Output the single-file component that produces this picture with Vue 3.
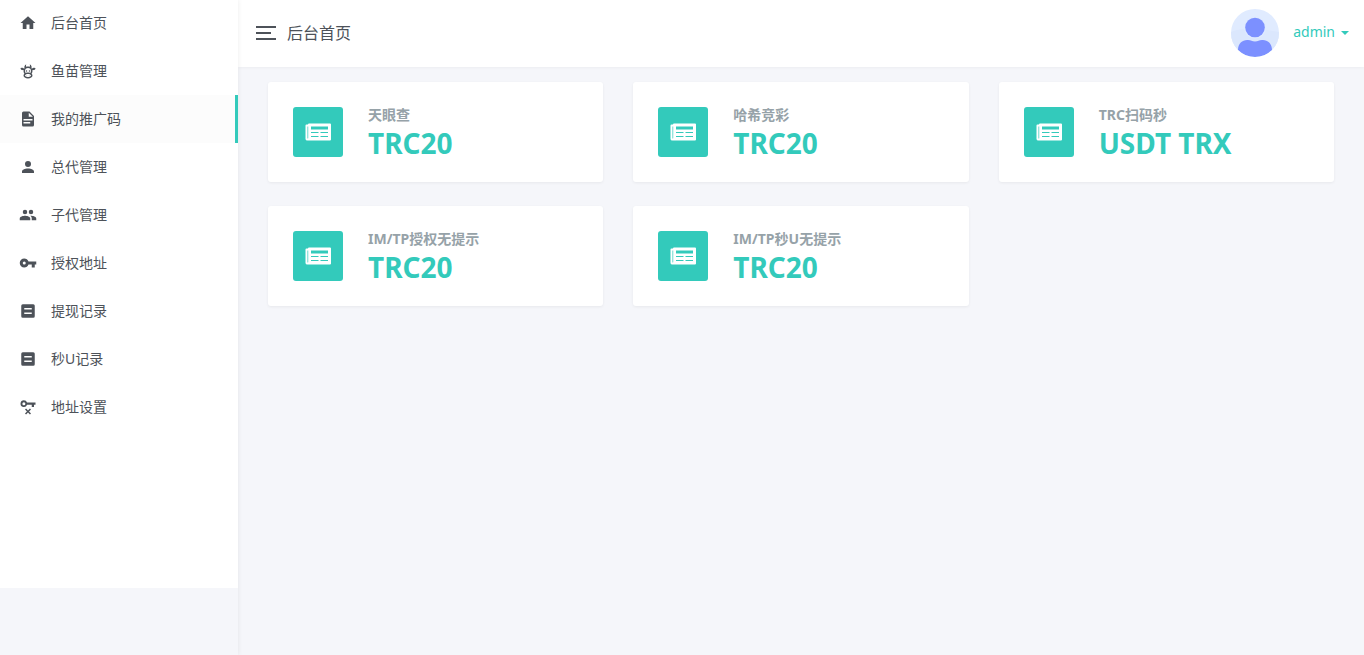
<script setup>
const menu = [
  { label: '后台首页', icon: 'home' },
  { label: '鱼苗管理', icon: 'cow' },
  { label: '我的推广码', icon: 'file', active: true },
  { label: '总代管理', icon: 'account' },
  { label: '子代管理', icon: 'accounts' },
  { label: '授权地址', icon: 'key' },
  { label: '提现记录', icon: 'note' },
  { label: '秒U记录', icon: 'note' },
  { label: '地址设置', icon: 'keyRemove' },
]

const icons = {
  home: 'M10,20V14H14V20H19V12H22L12,3L2,12H5V20H10Z',
  cow: 'M10.5 18A.5.5 0 0 1 11 18.5A.5.5 0 0 1 10.5 19A.5.5 0 0 1 10 18.5A.5.5 0 0 1 10.5 18M13.5 18A.5.5 0 0 1 14 18.5A.5.5 0 0 1 13.5 19A.5.5 0 0 1 13 18.5A.5.5 0 0 1 13.5 18M10 11A1 1 0 0 1 11 12A1 1 0 0 1 10 13A1 1 0 0 1 9 12A1 1 0 0 1 10 11M14 11A1 1 0 0 1 15 12A1 1 0 0 1 14 13A1 1 0 0 1 13 12A1 1 0 0 1 14 11M18 18C18 20.21 15.31 22 12 22C8.69 22 6 20.21 6 18C6 17.1 6.45 16.27 7.2 15.6C6.45 14.6 6 13.35 6 12L6.12 10.78C5.58 10.93 4.93 10.93 4.4 10.78C3.38 10.5 1.84 9.35 2.07 8.55C2.3 7.75 4.21 7.6 5.23 7.9C5.82 8.07 6.45 8.5 6.82 8.96L7.39 8.15C6.79 7.05 7 4 10 3L9.91 3.14V3.14C9.63 3.58 8.91 4.97 9.67 6.47C10.39 6.17 11.17 6 12 6C12.83 6 13.61 6.17 14.33 6.47C15.09 4.97 14.37 3.58 14.09 3.14L14 3C17 4 17.21 7.05 16.61 8.15L17.18 8.96C17.55 8.5 18.18 8.07 18.77 7.9C19.79 7.6 21.7 7.75 21.93 8.55C22.16 9.35 20.62 10.5 19.6 10.78C19.07 10.93 18.42 10.93 17.88 10.78L18 12C18 13.35 17.55 14.6 16.8 15.6C17.55 16.27 18 17.1 18 18M12 16C9.79 16 8 16.9 8 18C8 19.1 9.79 20 12 20C14.21 20 16 19.1 16 18C16 16.9 14.21 16 12 16M12 14C13.12 14 14.17 14.21 15.07 14.56C15.65 13.87 16 13 16 12A4 4 0 0 0 12 8A4 4 0 0 0 8 12C8 13 8.35 13.87 8.93 14.56C9.83 14.21 10.88 14 12 14Z',
  file: 'M6,2H14L20,8V20A2,2 0 0,1 18,22H6A2,2 0 0,1 4,20V4A2,2 0 0,1 6,2ZM13,3.5V9H18.5ZM6,12V14H18V12ZM6,16V18H15V16Z',
  account: 'M12,4A4,4 0 0,1 16,8A4,4 0 0,1 12,12A4,4 0 0,1 8,8A4,4 0 0,1 12,4M12,14C16.42,14 20,15.79 20,18V20H4V18C4,15.79 7.58,14 12,14Z',
  accounts: 'M16,13C15.71,13 15.38,13 15.03,13.05C16.19,13.89 17,15 17,16.5V19H23V16.5C23,14.17 18.33,13 16,13M8,13C5.67,13 1,14.17 1,16.5V19H15V16.5C15,14.17 10.33,13 8,13M8,11A3,3 0 0,0 11,8A3,3 0 0,0 8,5A3,3 0 0,0 5,8A3,3 0 0,0 8,11M16,11A3,3 0 0,0 19,8A3,3 0 0,0 16,5A3,3 0 0,0 13,8A3,3 0 0,0 16,11Z',
  key: 'M7,14A2,2 0 0,1 5,12A2,2 0 0,1 7,10A2,2 0 0,1 9,12A2,2 0 0,1 7,14M12.65,10C11.83,7.67 9.61,6 7,6A6,6 0 0,0 1,12A6,6 0 0,0 7,18C9.61,18 11.83,16.33 12.65,14H17V18H21V14H23V10H12.65Z',
  note: 'M5,3H19A2,2 0 0,1 21,5V19A2,2 0 0,1 19,21H5A2,2 0 0,1 3,19V5A2,2 0 0,1 5,3ZM7,8V10H17V8ZM7,14V16H17V14Z',
  keyRemove: 'M6.5,3A4.5,4.5 0 0,1 10.74,6H22V9H20V12H17V9H10.74A4.5,4.5 0 1,1 6.5,3ZM6.5,5.5A2,2 0 1,0 6.5,9.5A2,2 0 1,0 6.5,5.5ZM9.4,14L12,16.6L14.6,14L16,15.4L13.4,18L16,20.6L14.6,22L12,19.4L9.4,22L8,20.6L10.6,18L8,15.4Z',
}

const cards = [
  { label: '天眼查', value: 'TRC20' },
  { label: '哈希竞彩', value: 'TRC20' },
  { label: 'TRC扫码秒', value: 'USDT TRX' },
  { label: 'IM/TP授权无提示', value: 'TRC20' },
  { label: 'IM/TP秒U无提示', value: 'TRC20' },
]
</script>

<template>
  <div class="layout">
    <aside class="sidebar">
      <nav class="menu">
        <a v-for="item in menu" :key="item.label" href="#" class="item" :class="{ active: item.active }">
          <svg class="item-icon" viewBox="0 0 24 24" aria-hidden="true">
            <path :d="icons[item.icon]" fill="currentColor" fill-rule="evenodd" />
          </svg>
          <span class="item-text">{{ item.label }}</span>
        </a>
      </nav>
    </aside>

    <div class="page">
      <header class="topbar">
        <button class="toggle" type="button" aria-label="菜单">
          <span class="bar"></span>
          <span class="bar short"></span>
          <span class="bar"></span>
        </button>
        <h1 class="title">后台首页</h1>
        <button class="user" type="button">
          <svg class="avatar" viewBox="0 0 48 48" aria-hidden="true">
            <defs>
              <clipPath id="avatar-clip"><circle cx="24" cy="24" r="24" /></clipPath>
            </defs>
            <g clip-path="url(#avatar-clip)">
              <rect width="48" height="48" fill="#e0ebff" />
              <path d="M0 23Q10 19 24 20T48 23V48H0Z" fill="#dbe7fd" />
              <circle cx="24" cy="18.500" r="11" fill="#dfeaff" />
              <circle cx="24" cy="18.500" r="9.800" fill="#7c90ff" />
              <path d="M7 41C7 34 12 30.500 17 31C20 31.300 21 32.500 24 32.500S28 31.300 31 31C36 30.500 41 34 41 41Q34 48 24 48T7 41Z" fill="#7c90ff" />
            </g>
          </svg>
          <span class="user-name">admin</span>
          <span class="caret"></span>
        </button>
      </header>

      <main class="cards">
        <section v-for="card in cards" :key="card.label" class="card">
          <div class="badge">
            <svg class="news" viewBox="0 0 26 18" aria-hidden="true">
              <path
                d="M4 0.500H25Q26 0.500 26 1.500V16.500Q26 17.500 25 17.500H2.500Q0.500 17.500 0.500 16V2.500Q0.500 1.500 1.500 1.500H3Q3 0.500 4 0.500ZM2.500 3.500V15Q2.500 15.500 2.800 15.500T3.200 15V3.500ZM6 3.500V6.500H23V3.500ZM6 9V10H13.500V9ZM15.500 9V10H23V9ZM6 13V14H13.500V13ZM15.500 13V14H23V13Z"
                fill="#fff" fill-rule="evenodd" />
            </svg>
          </div>
          <div class="info">
            <p class="label">{{ card.label }}</p>
            <p class="value">{{ card.value }}</p>
          </div>
        </section>
      </main>
    </div>
  </div>
</template>

<style>
body {
  margin: 0;
  background: #f5f6fa;
}
</style>

<style scoped>
.layout {
  display: grid;
  grid-template-columns: 238px minmax(0, 1fr);
  min-height: 100vh;
  font-family: "Noto Sans", "Noto Sans CJK SC", sans-serif;
  font-size: 14px;
  color: #4d5259;
}

.sidebar {
  z-index: 1;
  box-shadow: 0 0 5px rgba(0, 0, 0, 0.08);
}

.menu {
  height: calc(100vh - 66px);
  margin-top: -1px;
  background: #fff;
}

.item {
  display: flex;
  align-items: center;
  gap: 14px;
  box-sizing: border-box;
  height: 48px;
  padding-left: 19px;
  border-right: 3px solid transparent;
  color: #4d5259;
  text-decoration: none;
}

.item.active {
  border-right-color: #33cabb;
  background: #fcfcfc;
}

.item-icon {
  width: 18px;
  height: 18px;
}

.item-text {
  padding-bottom: 2px;
}

.topbar {
  display: flex;
  align-items: center;
  box-sizing: border-box;
  height: 67px;
  padding: 0 15px 2px 18px;
  background: #fff;
  box-shadow: 0 1px 3px rgba(0, 0, 0, 0.04);
}

.toggle,
.user {
  padding: 0;
  border: 0;
  background: none;
  font: inherit;
}

.toggle {
  display: grid;
  gap: 4px;
  width: 20px;
}

.bar {
  height: 2px;
  background: #4d5259;
}

.short {
  width: 15px;
}

.title {
  margin: 0 0 0 11px;
  padding-bottom: 2px;
  font-size: 16px;
  font-weight: 400;
}

.user {
  display: flex;
  align-items: center;
  margin-left: auto;
  color: #33cabb;
}

.user-name {
  padding-bottom: 2px;
}

.avatar {
  width: 48px;
  height: 48px;
  margin-right: 14px;
}

.caret {
  margin-left: 6px;
  border: 4px solid transparent;
  border-top-color: #33cabb;
  border-bottom: 0;
}

.cards {
  display: grid;
  grid-template-columns: repeat(3, minmax(0, 1fr));
  gap: 24px 30px;
  padding: 15px 30px;
}

.card {
  display: flex;
  gap: 25px;
  padding: 25px 25px 19px;
  border-radius: 3px;
  background: #fff;
  box-shadow: 0 1px 3px rgba(0, 0, 0, 0.06);
}

.badge {
  display: grid;
  place-items: center;
  width: 50px;
  height: 50px;
  border-radius: 3px;
  background: #33cabb;
}

.news {
  width: 26px;
  height: 18px;
}

.label,
.value {
  margin: 0;
  font-weight: 700;
  white-space: nowrap;
}

.label {
  font-size: 14px;
  line-height: 16px;
  color: #96a2a8;
}

.value {
  font-size: 28px;
  line-height: 40px;
  color: #33cabb;
}
</style>
